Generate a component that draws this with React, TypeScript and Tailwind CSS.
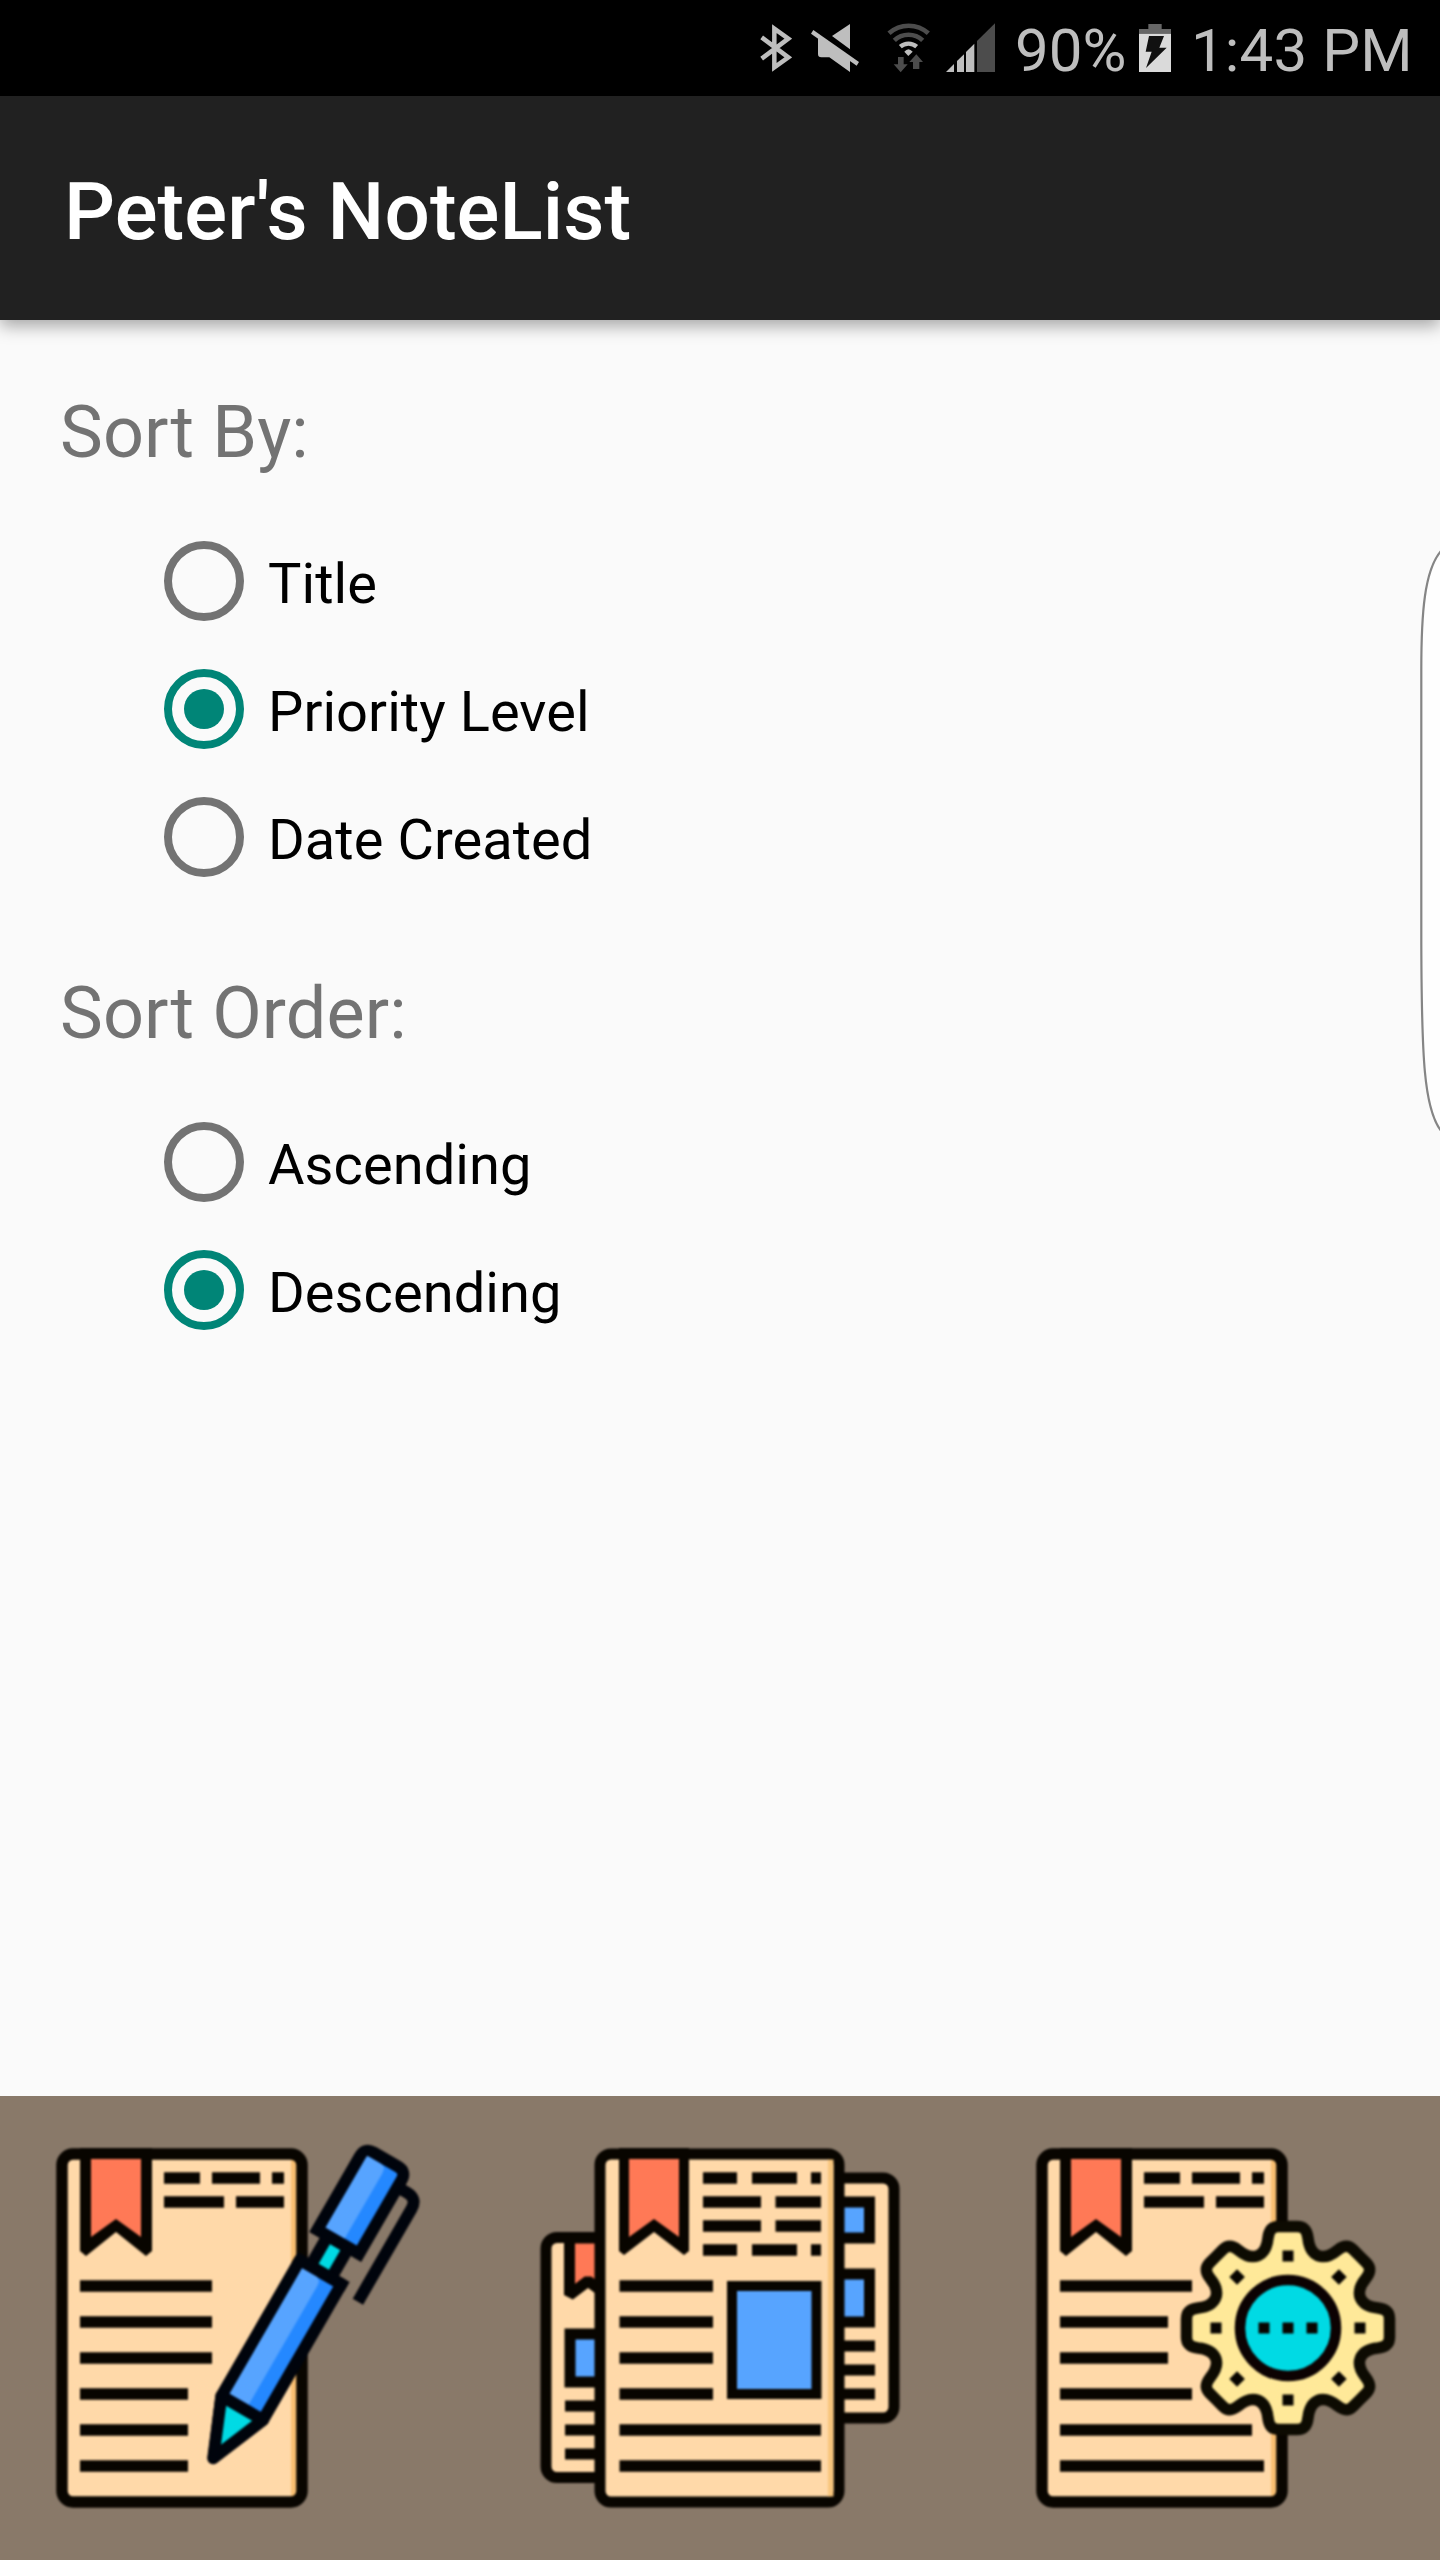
import { useState } from "react";

const LIGHT = "#bebebe";
const DIM = "#4c4c4c";

function BluetoothIcon() {
  return (
    <svg className="h-[52px] w-8 shrink-0" viewBox="60 66 96 156" fill="none" stroke={LIGHT} strokeWidth="13.5">
      <path d="M65 112 L145 172 L103 202 V86 L145 116 L65 176" strokeMiterlimit="8" />
    </svg>
  );
}

function MuteIcon() {
  return (
    <svg className="ml-[18px] h-[52px] w-[50px] shrink-0" viewBox="210 66 150 156" fill={LIGHT}>
      <path d="M220 90 L357 186 L350 197 L213 101 Z" />
      <path d="M276 108 L330 72 V148 Z" />
      <path d="M236 110 L330 176 V216 L268 172 H244 Q234 172 234 162 V116 Z" />
    </svg>
  );
}

function WifiIcon() {
  return (
    <svg className="ml-[26px] h-[52px] w-[45px] shrink-0" viewBox="438 66 135 156" fill="none" strokeWidth="14">
      <path d="M447 100 A88 88 0 0 1 565 100" stroke={DIM} />
      <path d="M463 121 A62 62 0 0 1 548 121" stroke={DIM} />
      <path d="M481 140 A37 37 0 0 1 530 140" stroke={LIGHT} strokeWidth="13" />
      <path d="M505 168 L493 155 Q505 140 518 155 Z" fill={LIGHT} />
      <path d="M474 171 H491 V193 H503 L482 217 L461 193 H474 Z" fill={DIM} />
      <path d="M529 163 L549 186 H538 V207 H519 V186 H508 Z" fill={DIM} />
    </svg>
  );
}

function SignalIcon() {
  return (
    <svg className="ml-[14px] h-[52px] w-[51px] shrink-0" viewBox="615 66 153 156" fill={LIGHT}>
      <path d="M618 216 L642 192 V216 Z" />
      <path d="M651 183 L672 163 V216 H651 Z" />
      <path d="M678 156 L703 131 V216 H678 Z" />
      <path d="M711 123 L765 70 V216 H711 Z" fill={DIM} />
    </svg>
  );
}

function BatteryIcon() {
  return (
    <svg className="h-[52px] w-[34px] shrink-0" viewBox="174 66 102 156">
      <path d="M205 72 H245 V87 H273 V101 H177 V87 H205 Z" fill="#666666" />
      <path d="M177 101 H273 V216 H177 Z" fill="#dadada" />
      <path d="M207 108 H252 L238 143 H260 L198 204 L215 155 H197 Z" fill="#111111" />
    </svg>
  );
}

function StatusBar() {
  return (
    <div className="flex h-24 items-center bg-black pl-[760px] text-[60px] leading-[70px] text-[#bebebe]">
      <BluetoothIcon />
      <MuteIcon />
      <WifiIcon />
      <SignalIcon />
      <span className="ml-[19px] w-[123px] shrink-0 pt-[5px] whitespace-nowrap">90%</span>
      <BatteryIcon />
      <span className="ml-[19px] shrink-0 pt-[5px] tracking-[0.15px] whitespace-nowrap">1:43 PM</span>
    </div>
  );
}

type RadioGroupProps = {
  label: string;
  options: string[];
  value: string;
  onChange: (value: string) => void;
};

function RadioGroup({ label, options, value, onChange }: RadioGroupProps) {
  return (
    <section>
      <h2 className="pl-[60px] text-[72px] leading-[85px] tracking-[0.15px] text-[#737373]">{label}</h2>
      <div className="mt-[42px] pl-[164px]" role="radiogroup" aria-label={label}>
        {options.map((option) => {
          const checked = option === value;
          return (
            <button
              key={option}
              type="button"
              role="radio"
              aria-checked={checked}
              onClick={() => onChange(option)}
              className="flex h-32 items-center"
            >
              <span
                className={
                  checked
                    ? "flex size-20 items-center justify-center rounded-full border-8 border-[#008577]"
                    : "flex size-20 items-center justify-center rounded-full border-8 border-[#737373]"
                }
              >
                {checked && <span className="size-10 rounded-full bg-[#008577]" />}
              </span>
              <span className="ml-6 pt-[6px] text-[56px] leading-[66px] tracking-[0.06px] text-black">{option}</span>
            </button>
          );
        })}
      </div>
    </section>
  );
}

const PAPER = "#ffd9a9";
const BLUE = "#57a4ff";
const CORAL = "#ff7956";
const TEAL = "#00dae4";
const INK = "#080500";

function Bookmark() {
  return (
    <>
      <path d="M80 2148 V2251 L86 2256 L116 2232 L146 2256 L152 2251 V2148 Z" fill={INK} />
      <path d="M91 2159 H141 V2237 L116 2219 L91 2237 Z" fill={CORAL} />
    </>
  );
}

function Page({ lines }: { lines: string }) {
  return (
    <>
      <rect x="62" y="2154" width="240" height="348" rx="11" fill={PAPER} />
      <path d="M291 2157 H300 V2499 H291 Z" fill="#f8be70" />
      <rect x="62" y="2154" width="240" height="348" rx="11" fill="none" stroke={INK} strokeWidth="11.5" />
      <Bookmark />
      <path
        d={"M164 2178 H200 M212 2178 H260 M272 2178 H284 M164 2202 H224 M236 2202 H284 " + lines}
        stroke={INK}
        strokeWidth="11.5"
      />
    </>
  );
}

function WriteNoteIcon() {
  return (
    <svg className="h-full w-full blur-[1px]" viewBox="0 2096 480 464">
      <Page lines="M80 2286 H212 M80 2322 H212 M80 2358 H212 M80 2394 H188 M80 2430 H188 M80 2466 H188" />
      <g transform="translate(317.7 2277.3) rotate(30)" stroke="#00040c" strokeWidth="12">
        <path d="M24 -118 H35 Q47 -118 47 -106 V1" fill="none" />
        <rect x="-12" y="-41" width="24" height="35" fill={TEAL} />
        <path d="M-24 -41 V-126 Q-24 -136 -14 -136 H14 Q24 -136 24 -126 V-41 Z" fill="#2488ff" />
        <path d="M-18 -47 V-130 H-2 Q4 -130 4 -122 V-47 Z" fill={BLUE} stroke="none" />
        <path d="M-24 -6 H24 V151 L0 208 L-24 151 Z" fill="#2488ff" strokeLinejoin="round" />
        <path d="M-24 -6 H24" strokeLinecap="square" />
        <path d="M-18 0 H-2 Q4 0 4 8 V145 H-18 Z" fill={BLUE} stroke="none" />
        <path d="M-24 151 H24 L0 209 Z" fill={TEAL} strokeLinejoin="round" />
      </g>
    </svg>
  );
}

function NoteListIcon() {
  return (
    <svg className="h-full w-full blur-[1px]" viewBox="480 2096 480 464">
      <g stroke={INK} strokeWidth="11">
        <rect x="780" y="2178" width="114" height="240" rx="11" fill={PAPER} />
        <rect x="800" y="2202" width="69.500" height="36" fill={BLUE} />
        <rect x="800" y="2274" width="69.500" height="48" fill={BLUE} />
        <path d="M800 2346 H875 M800 2370 H875 M800 2394 H875" />

        <rect x="546" y="2237.500" width="110" height="240" rx="11" fill={PAPER} />
        <path d="M569.500 2238 V2295 L588 2281 L607 2295 V2238 Z" fill={CORAL} strokeLinejoin="bevel" />
        <rect x="570" y="2334" width="60" height="48" fill={BLUE} />
        <path d="M565 2406 H620 M565 2430 H620 M565 2454 H620" />

        <rect x="600" y="2154" width="239" height="348" rx="11" fill={PAPER} />
      </g>
      <path d="M828 2159.500 H833.500 V2496.500 H828 Z" fill="#f8c57c" />
      <g transform="translate(538 0)">
        <path d="M81 2148 V2251 L86 2255 L116 2232 L146 2255 L151 2251 V2148 Z" fill={INK} />
        <path d="M91 2159 H141 V2237 L116 2219 L91 2237 Z" fill={CORAL} />
      </g>
      <g stroke={INK} strokeWidth="11.5">
        <path d="M703 2178 H737 M752 2178 H797 M811 2178 H821 M703 2202 H761 M775.500 2202 H821" />
        <path d="M703 2250 H737 M752 2250 H797 M811 2250 H821 M703 2226 H761 M775.500 2226 H821" />
        <path d="M619.500 2286 H713 M619.500 2322 H713 M619.500 2358 H713 M619.500 2394 H713" />
        <path d="M619.500 2430 H821 M619.500 2466 H821" />
        <rect x="732" y="2286" width="84.500" height="108" fill={BLUE} strokeWidth="10" />
      </g>
    </svg>
  );
}

// One tooth, pointing up, as cubic segments around the gear's centre.
const TOOTH: [number, number][] = [
  [-24, -75], [-21, -80], [-20, -90],
  [-19, -98], [-16, -101.5], [-9, -101.5],
  [-3, -101.5], [3, -101.5], [9, -101.5],
  [16, -101.5], [19, -98], [20, -90],
  [21, -80], [24, -75], [30, -72.4],
];

function gearPath() {
  let d = "M-30 -72.4";
  for (let i = 0; i < 8; i++) {
    const c = Math.cos((i * Math.PI) / 4);
    const s = Math.sin((i * Math.PI) / 4);
    TOOTH.forEach(([x, y], k) => {
      d += `${k % 3 === 0 ? " C" : " "}${(x * c - y * s).toFixed(2)} ${(x * s + y * c).toFixed(2)}`;
    });
  }
  return d + " Z";
}

function SettingsIcon() {
  return (
    <svg className="h-full w-full blur-[1px]" viewBox="-20 2096 480 464">
      <Page lines="M80 2286 H212 M80 2322 H188 M80 2358 H188 M80 2394 H212 M80 2430 H272 M80 2466 H284" />
      <g transform="translate(308 2328)">
        <path d={gearPath()} fill="#ffe999" stroke="#0d0b02" strokeWidth="11.5" />
        <circle r="48" fill={TEAL} stroke="#0c0202" strokeWidth="10.5" />
        {[0, 45, 90, 135, 180, 225, 270, 315].map((angle) => (
          <rect key={angle} x="-5.5" y="-77.500" width="11" height="11" transform={`rotate(${angle})`} fill={INK} />
        ))}
        {[-24, 0, 24].map((x) => (
          <rect key={x} x={x - 5.5} y="-5.5" width="11" height="11" fill={INK} />
        ))}
      </g>
    </svg>
  );
}

function EdgeHandle() {
  return (
    <svg className="absolute top-[540px] right-0 h-[604px] w-6" viewBox="1416 540 24 604">
      <path
        d="M1442 550 C1424 569 1421.300 615 1421.300 670 V930 C1421.300 1060 1424 1111 1442 1132"
        fill="#fefefe"
        stroke="#858585"
        strokeWidth="2.2"
      />
    </svg>
  );
}

export default function App() {
  const [sortBy, setSortBy] = useState("Priority Level");
  const [order, setOrder] = useState("Descending");

  return (
    <div className="relative flex h-[2560px] w-[1440px] flex-col overflow-hidden bg-[#fafafa] font-[Roboto,sans-serif]">
      <StatusBar />
      <header className="flex h-56 items-center bg-[#212121] pt-2 pl-16 shadow-[0_6px_16px_rgba(0,0,0,0.34)]">
        <h1 className="text-[80px] leading-[94px] font-medium tracking-[0.08px] text-white">Peter's NoteList</h1>
      </header>
      <main className="flex flex-1 flex-col gap-[70px] pt-[70px]">
        <RadioGroup
          label="Sort By:"
          options={["Title", "Priority Level", "Date Created"]}
          value={sortBy}
          onChange={setSortBy}
        />
        <RadioGroup label="Sort Order:" options={["Ascending", "Descending"]} value={order} onChange={setOrder} />
      </main>
      <nav className="grid h-[464px] shrink-0 grid-cols-3 bg-[#897969]">
        <button type="button" aria-label="Write note">
          <WriteNoteIcon />
        </button>
        <button type="button" aria-label="All notes">
          <NoteListIcon />
        </button>
        <button type="button" aria-label="Settings">
          <SettingsIcon />
        </button>
      </nav>
      <EdgeHandle />
    </div>
  );
}
